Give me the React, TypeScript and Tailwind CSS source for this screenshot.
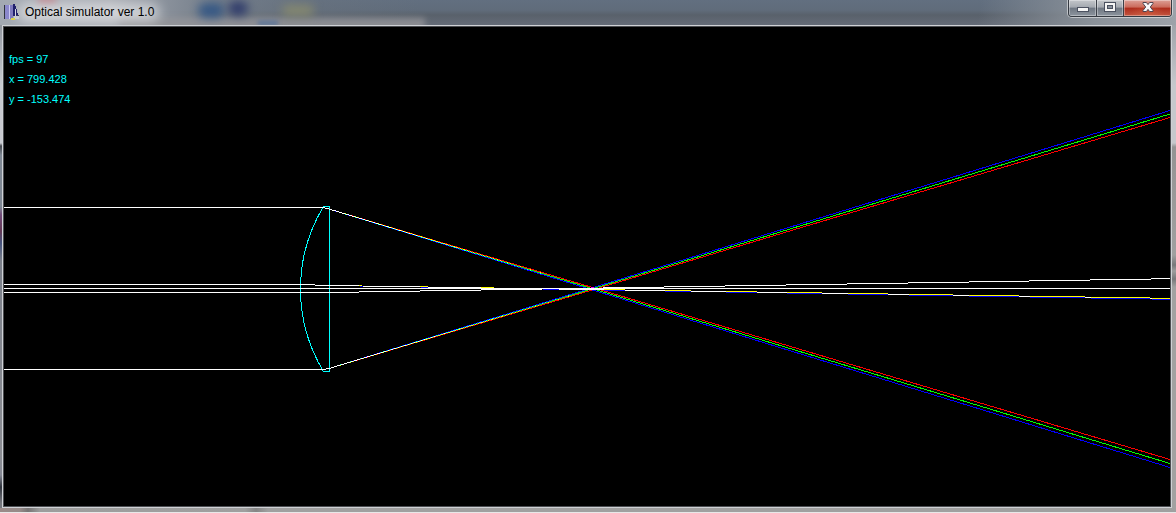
import { ReactNode } from "react";

interface Ray {
  color: string;
  points: string;
}

// Outer rays split into their colour components after the lens
const rays: Ray[] = [
  { color: "#ff0000", points: "4,207.5 323,207.5 329,209 1170,459.5" },
  { color: "#00ff00", points: "4,207.5 323,207.5 329,209 1170,463.5" },
  { color: "#0000ff", points: "4,207.5 323,207.5 329,209 1170,467.5" },
  { color: "#ff0000", points: "4,369.5 323,369.5 329,368.5 1170,117.5" },
  { color: "#00ff00", points: "4,369.5 323,369.5 329,368.5 1170,114" },
  { color: "#0000ff", points: "4,369.5 323,369.5 329,368.5 1170,110.5" },
  { color: "#ffff00", points: "4,284.5 301,284.5 329,285.5 1170,298.3" },
  { color: "#0000ff", points: "4,284.5 301,284.5 329,285.5 1170,299.3" },
  { color: "#ffffff", points: "4,288.5 1170,288.5" },
  { color: "#ffffff", points: "4,292.5 329,292.5 1170,278.7" },
];

const readings = [
  { label: "fps", value: "97" },
  { label: "x", value: "799.428" },
  { label: "y", value: "-153.474" },
];

function AppIcon() {
  return (
    <svg className="h-4 w-4 shrink-0" viewBox="0 0 16 16" shapeRendering="crispEdges" aria-hidden="true">
      <path d="M0 1h3v1H1v13H0z" fill="#30343c" />
      <path d="M1 4h1v10H1z" fill="#b9bcc6" />
      <path d="M1 1h4v14H1z" fill="#8b88cc" />
      <path d="M5 1h1v14H5z" fill="#c9c7f2" />
      <path d="M6 1h3v14H6z" fill="#7d79bd" />
      <path d="M9 0h2v2h1v3h1v4h1v3H9z" fill="#20206c" />
      <path d="M11 5h1v7h-1z" fill="#d7d9e2" />
      <path d="M10 12h5v3h-5z" fill="#c9ccd3" />
      <path d="M12 11h3v1h-3z" fill="#393a5e" />
      <path d="M7 14h4v2H7z" fill="#d8d24a" />
    </svg>
  );
}

function CaptionButton({ label, className, children }: { label: string; className: string; children: ReactNode }) {
  return (
    <button
      type="button"
      aria-label={label}
      className={`flex h-full items-center justify-center shadow-[inset_0_0_0_1px_rgba(255,255,255,0.35)] ${className}`}
    >
      {children}
    </button>
  );
}

function TitleBar() {
  return (
    <header className="relative flex h-[25px] items-start justify-between overflow-hidden bg-[linear-gradient(180deg,#626f80_0%,#606c7b_40%,#59616b_60%,#646b77_100%)]">
      {/* Blurred desktop showing through the glass */}
      <div className="absolute inset-0 bg-[linear-gradient(90deg,#a3a9b2_0px,#a9acb3_110px,#8c939d_160px,#7d858f99_220px,#6b747f66_320px,transparent_420px)]" />
      <div className="absolute inset-y-0 right-0 w-[230px] bg-[linear-gradient(100deg,transparent_15%,#8b929a_65%,#9da2a9_100%)]" />
      <div className="absolute left-[120px] top-[18px] h-3 w-[305px] bg-[#96969a] opacity-80 blur-[3px]" />
      <div className="absolute left-[198px] top-[3px] h-[15px] w-[26px] rounded-full bg-[#2f5484] opacity-90 blur-[5px]" />
      <div className="absolute left-[228px] top-[1px] h-[15px] w-[20px] rounded-full bg-[#2b3769] opacity-90 blur-[5px]" />
      <div className="absolute left-[282px] top-[5px] h-[11px] w-[32px] rounded-full bg-[#85886f] blur-[5px]" />
      <div className="absolute left-[258px] top-[21px] h-[4px] w-[20px] bg-[#55719a] blur-[2px]" />
      <div className="absolute left-[38px] -top-[3px] h-[7px] w-[18px] bg-[#b77f88] blur-[3px]" />
      <div className="absolute left-[18px] top-[3px] h-[19px] w-[142px] rounded-full bg-white/50 blur-[6px]" />

      <div className="relative flex items-center gap-[5px] pl-1 pt-1">
        <AppIcon />
        <h1 className="font-['Liberation_Sans',sans-serif] text-[12px] leading-4 text-black">
          Optical simulator ver 1.0
        </h1>
      </div>

      <div className="relative mr-[4px] flex h-[17px] overflow-hidden rounded-b-[4px] border border-t-0 border-[#353a42] shadow-[0_0_0_1px_rgba(255,255,255,0.5)]">
        <CaptionButton
          label="Minimize"
          className="w-7 border-r border-[#3b4048] bg-[linear-gradient(180deg,#c3c6ca_0%,#a4a9b0_45%,#6f7782_50%,#8c949e_100%)]"
        >
          <svg width="12" height="14" viewBox="0 0 12 14" shapeRendering="crispEdges">
            <rect x="0.5" y="6.5" width="11" height="4" fill="#f5f5f5" stroke="#4c5261" />
          </svg>
        </CaptionButton>
        <CaptionButton
          label="Maximize"
          className="w-[27px] border-r border-[#3b4048] bg-[linear-gradient(180deg,#c3c6ca_0%,#a4a9b0_45%,#6f7782_50%,#8c949e_100%)]"
        >
          <svg width="12" height="14" viewBox="0 0 12 14" shapeRendering="crispEdges">
            <rect x="0.5" y="1.5" width="11" height="9" fill="#f5f5f5" stroke="#4c5261" />
            <rect x="3.5" y="4.5" width="5" height="3" fill="#89919c" stroke="#4c5261" />
          </svg>
        </CaptionButton>
        <CaptionButton
          label="Close"
          className="w-[47px] bg-[radial-gradient(circle_at_50%_110%,#e0765066,transparent_60%),linear-gradient(180deg,#dda096_0%,#cb6a5b_45%,#ad2c1b_50%,#c4553f_100%)]"
        >
          <svg width="12" height="14" viewBox="0 0 12 14">
            <path
              d="M1 1.5h3.4L6 3.6l1.6-2.1H11v1L8.3 6l2.7 3.5v1H7.6L6 8.4l-1.6 2.1H1v-1L3.7 6 1 2.5z"
              fill="#f7f7f7"
              stroke="#4f4450"
            />
          </svg>
        </CaptionButton>
      </div>
    </header>
  );
}

function OpticalScene() {
  return (
    <svg
      className="isolate block h-auto w-full bg-black"
      viewBox="4 27 1166 479"
      fill="none"
      shapeRendering="crispEdges"
      role="img"
      aria-label="Ray diagram"
    >
      <path d="M323.5 206.5H329.5V371.5H323.5A159.5 159.5 0 0 1 323.5 206.5" stroke="#00ffff" />
      {rays.map((ray) => (
        <polyline key={ray.points + ray.color} className="mix-blend-screen" points={ray.points} stroke={ray.color} />
      ))}
    </svg>
  );
}

export default function App() {
  return (
    <div className="border-b border-[#e8e8e8] bg-[#9b9b9b]">
      <TitleBar />
      <div className="flex">
        <div className="w-[2px] shrink-0 bg-[linear-gradient(180deg,#92979f_0px,#c8cad0_60px,#c8cad0_118px,#45484f_121px,#7e8793_130px,#7e8793_182px,#714a78_190px,#633955_206px,#45537d_218px,#7b808a_236px,#8b8d93_430px,#858894_450px,#30343d_462px,#75777d_478px)]" />
        <main className="relative min-w-0 flex-1 border border-[#cfd1d5]">
          <div className="border border-[#4c4e52]">
            <OpticalScene />
          </div>
          <dl className="absolute left-[6px] top-[23px] font-['Liberation_Sans',sans-serif] text-[11px] leading-5 text-[#00ffff]">
            {readings.map((reading) => (
              <div key={reading.label} className="flex gap-[3px]">
                <dt>{reading.label} =</dt>
                <dd>{reading.value}</dd>
              </div>
            ))}
          </dl>
        </main>
        <div className="w-[4px] shrink-0 bg-[linear-gradient(180deg,#a0a4aa_0px,#c6c8cc_60px,#c6c8cc_118px,#939393_122px,#a0a0a0_230px,#77787a_240px,#9d9d9d_246px,#77787a_254px,#a1a1a1_262px,#a1a1a1_100%)]" />
      </div>
      <footer className="h-[4px] bg-[linear-gradient(90deg,#9b8b89_0px,#978b89_20px,#777474_28px,#9d9d9d_40px,#9f9f9f_245px,#858585_256px,#a0a0a0_268px,#a0a0a0_100%)]" />
    </div>
  );
}
